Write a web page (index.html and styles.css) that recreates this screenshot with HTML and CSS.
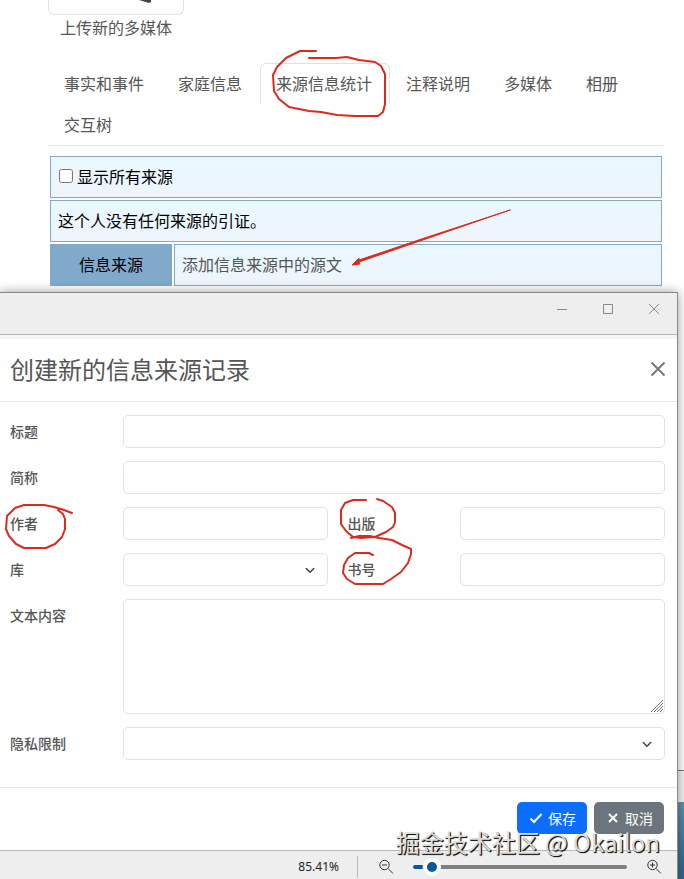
FILE: index.html
```html
<!DOCTYPE html>
<html lang="zh-CN">

<head>
    <meta charset="UTF-8">
    <meta name="viewport" content="width=device-width, initial-scale=1.0">
    <title>创建新的信息来源记录</title>
    <link rel="stylesheet" href="styles.css">
</head>

<body>
    <main class="page">
        <div class="media">
            <div class="thumb">
                <svg width="12" height="3" viewBox="0 0 12 3"><path d="M0 0h12v2l-2 1z" fill="#444" /></svg>
            </div>
            <a class="upload" href="#">上传新的多媒体</a>
        </div>

        <nav class="tabs">
            <a href="#">事实和事件</a>
            <a href="#">家庭信息</a>
            <a href="#" class="active">来源信息统计</a>
            <a href="#">注释说明</a>
            <a href="#">多媒体</a>
            <a href="#">相册</a>
            <a href="#">交互树</a>
        </nav>

        <table class="facts">
            <tr>
                <td colspan="2"><label class="show-all"><input type="checkbox">显示所有来源</label></td>
            </tr>
            <tr>
                <td colspan="2">这个人没有任何来源的引证。</td>
            </tr>
            <tr>
                <th scope="row">信息来源</th>
                <td><a href="#">添加信息来源中的源文</a></td>
            </tr>
        </table>
    </main>

    <div class="desk">
        <section class="window">
            <div class="titlebar">
                <button type="button" aria-label="最小化">
                    <svg width="12" height="12" viewBox="0 0 12 12"><path d="M1 6.5h10" /></svg>
                </button>
                <button type="button" aria-label="最大化">
                    <svg width="12" height="12" viewBox="0 0 12 12"><path d="M1.5 1.5h9v9h-9z" /></svg>
                </button>
                <button type="button" aria-label="关闭窗口">
                    <svg width="12" height="12" viewBox="0 0 12 12"><path d="M1 1l10 10M11 1L1 11" /></svg>
                </button>
            </div>

            <form class="dialog">
                <header class="dialog-header">
                    <h1>创建新的信息来源记录</h1>
                    <button type="button" aria-label="关闭">
                        <svg width="16" height="16" viewBox="0 0 16 16"><path d="M1.500 1.500l13 13M14.500 1.500l-13 13" /></svg>
                    </button>
                </header>

                <div class="fields">
                    <label for="title">标题</label>
                    <div class="wide"><input type="text" id="title"></div>

                    <label for="abbr">简称</label>
                    <div class="wide"><input type="text" id="abbr"></div>

                    <label for="author">作者</label>
                    <div><input type="text" id="author"></div>
                    <label for="publ">出版</label>
                    <div><input type="text" id="publ"></div>

                    <label for="repo">库</label>
                    <div><select id="repo"><option></option></select></div>
                    <label for="call">书号</label>
                    <div><input type="text" id="call"></div>

                    <label for="text">文本内容</label>
                    <div class="wide"><textarea id="text"></textarea></div>

                    <label for="privacy">隐私限制</label>
                    <div class="wide"><select id="privacy"><option></option></select></div>
                </div>

                <footer class="dialog-footer">
                    <button type="submit" class="save">
                        <svg width="14" height="14" viewBox="0 0 14 14"><path d="M1.500 7.500l3.500 3.500 7.500-8" /></svg>
                        保存
                    </button>
                    <button type="button" class="cancel">
                        <svg width="14" height="14" viewBox="0 0 14 14"><path d="M3 3l8 8M11 3l-8 8" /></svg>
                        取消
                    </button>
                </footer>
            </form>

            <div class="statusbar">
                <span class="percent">85.41%</span>
                <button type="button" aria-label="缩小">
                    <svg width="16" height="16" viewBox="0 0 16 16"><circle cx="6.5" cy="6" r="4.7" /><path d="M4 6h5M10 9.500l5 5" /></svg>
                </button>
                <input type="range" class="zoom" aria-label="缩放" min="0" max="100" value="5">
                <button type="button" aria-label="放大">
                    <svg width="16" height="16" viewBox="0 0 16 16"><circle cx="6.5" cy="6" r="4.7" /><path d="M4 6h5M6.500 3.500v5M10 9.500l5 5" /></svg>
                </button>
            </div>
        </section>
        <div class="edge">
            <div class="edge-page"></div>
            <div class="edge-bar"></div>
            <div class="edge-wallpaper"></div>
        </div>
    </div>

    <!-- red pen marks -->
    <svg class="marks" width="684" height="879" viewBox="0 0 684 879">
        <path d="M316 51h-16l-14 7-9 9-4 8 1 16 5 8 10 8 20 4 12 1 16 3 18 1h23l5-4 2-8V74l-4-8-6-4-16-2-12-3-11 1h-27" />
        <path d="M72 513l-8-3-10-3-10-2H24l-9 3-8 8-1 13 3 7 7 8 8 4h22l9-4 7-7 3-8v-10l-2-5-5-4" />
        <path d="M366 500h-13l-8 3-4 7v14l5 7 7 6 8 1 14-1 11-5 7-5 2-5v-9l-3-6-9-6-6-2" />
        <path d="M373 555l-4-2h-14l-7 5-4 7-1 8 4 6 8 5h28l8-5 10-7 7-9 3-9v-5l-9-4-10-5-13-2-9-2h-11l-8 2" />
        <path class="head" d="M510 210L420 239.500 359 260v-2l-7 7 8-1-1-2 61-21z" />
    </svg>
    <div class="watermark">掘金技术社区 @ Okailon</div>
</body>

</html>
```
FILE: styles.css
```css
* {
    margin: 0;
    padding: 0;
    box-sizing: border-box;
}

body {
    position: relative;
    min-height: 100vh;
    display: flex;
    flex-direction: column;
    overflow: hidden;
    background: #fff;
    color: #000;
    font-family: "Noto Sans CJK SC", "Noto Sans", sans-serif;
    font-size: 16px;
    line-height: 24px;
}

a {
    color: #555;
    text-decoration: none;
}

button,
input,
select,
textarea {
    font: inherit;
}

button {
    border: none;
    background: none;
    cursor: pointer;
}

svg {
    display: block;
    fill: none;
}

/* person page */
.page {
    padding: 0 20px 4px 48px;
}

.media {
    width: 136px;
    text-align: center;
}

.thumb {
    height: 15px;
    border: 1px solid #dee2e6;
    border-top: none;
    border-radius: 0 0 6px 6px;
    padding-left: 90px;
}

.upload {
    display: block;
}

.tabs {
    display: flex;
    flex-wrap: wrap;
    margin-top: 24px;
    border-bottom: 1px solid #dee2e6;
}

.tabs a {
    padding: 7px 17px 9px 15px;
    border: 1px solid transparent;
    border-bottom: none;
    border-radius: 6px 6px 0 0;
}

.tabs a.active {
    border-color: #dee2e6;
}

.facts {
    width: 100%;
    margin-top: 8px;
    border-spacing: 2px;
}

.facts td,
.facts th {
    height: 42px;
    padding: 7px 7px 9px;
    border: 1px solid #81a9cb;
    font-weight: 400;
}

.facts td {
    background: linear-gradient(#e9f8ff, #eef4fc);
}

.facts th {
    width: 122px;
    background: #81a9cb;
}

.show-all {
    display: flex;
    align-items: center;
    gap: 4px;
}

.show-all input {
    width: 14px;
    height: 14px;
    margin-left: 1px;
}

/* floating window */
.desk {
    flex: 1;
    display: flex;
}

.window {
    flex: 1;
    display: flex;
    flex-direction: column;
    position: relative;
    z-index: 1;
    border-top: 1px solid #888;
    border-right: 1px solid #888;
    background: #fff;
    box-shadow: 0 0 10px rgba(0, 0, 0, 0.4);
}

.titlebar {
    display: flex;
    justify-content: flex-end;
    height: 42px;
    padding-bottom: 9px;
    border-bottom: 1px solid #b9b9b9;
    background: #eee;
}

.titlebar button {
    display: grid;
    place-items: center;
    width: 46px;
}

.titlebar svg {
    stroke: #888;
}

.dialog {
    border-top: 4px solid #f5f5f5;
}

.dialog-header {
    display: flex;
    align-items: center;
    justify-content: space-between;
    height: 63px;
    padding: 0 11px 3px 10px;
    border-bottom: 1px solid #e6e8ea;
}

.dialog-header h1 {
    font-size: 24px;
    line-height: 32px;
    font-weight: 400;
    color: #555;
}

.dialog-header svg {
    stroke: #777;
    stroke-width: 2;
}

.fields {
    display: grid;
    grid-template-columns: 1fr 2fr 1fr 2fr;
    row-gap: 13px;
    padding: 13px 2px 27px 0;
    font-size: 14px;
    border-bottom: 1px solid #e6e8ea;
}

.fields label {
    padding: 4px 0 0 10px;
    font-weight: 500;
    color: #555;
}

.fields div {
    display: flex;
    padding: 0 10px;
}

.fields .wide {
    grid-column: span 3;
}

.fields input,
.fields select,
.fields textarea {
    width: 100%;
    height: 33px;
    padding: 4px 10px;
    border: 1px solid #dee2e6;
    border-radius: 5px;
    background: #fff;
}

.fields select {
    appearance: none;
    background: #fff url("data:image/svg+xml,%3Csvg xmlns='http://www.w3.org/2000/svg' viewBox='0 0 16 16'%3E%3Cpath fill='none' stroke='%23444' stroke-width='2' stroke-linecap='round' stroke-linejoin='round' d='m3 6 5 5 5-5'/%3E%3C/svg%3E") no-repeat right 11px center / 12px 12px;
}

.fields textarea {
    height: 115px;
    resize: vertical;
}

.fields textarea::-webkit-resizer {
    background: url("data:image/svg+xml,%3Csvg xmlns='http://www.w3.org/2000/svg' viewBox='0 0 15 15'%3E%3Cpath fill='none' stroke='%23777' d='M2 14 14 2M5 14l9-9M8 14l6-6M11 14l3-3'/%3E%3C/svg%3E") no-repeat center / 15px 15px;
}

.dialog-footer {
    display: flex;
    justify-content: flex-end;
    gap: 7px;
    padding: 14px 13px 16px;
}

.dialog-footer button {
    display: flex;
    align-items: center;
    gap: 5px;
    height: 32px;
    padding: 0 11px 0 12px;
    border-radius: 5px;
    font-size: 14px;
    color: #fff;
}

.dialog-footer svg {
    stroke: #fff;
    stroke-width: 2;
}

.save {
    background: #0d6efd;
}

.cancel {
    background: #6c757d;
}

.statusbar {
    flex: 1;
    display: flex;
    align-items: center;
    justify-content: flex-end;
    padding: 4px 15px 0 10px;
    border-top: 1px solid #b9b9b9;
    background: #eee;
}

.percent {
    height: 22px;
    margin-right: 20px;
    padding-right: 18px;
    border-right: 1px solid #bbb;
    font-family: "Noto Sans", sans-serif;
    font-size: 12px;
    line-height: 22px;
    color: #222;
}

.statusbar svg {
    stroke: #333;
}

.zoom {
    appearance: none;
    width: 214px;
    height: 18px;
    margin: 0 19px;
    background: none;
}

.zoom::-webkit-slider-runnable-track {
    height: 4px;
    border-radius: 2px;
    background: linear-gradient(to right, #005a9e 9px, #7f7f7f 9px);
}

.zoom::-webkit-slider-thumb {
    appearance: none;
    width: 18px;
    height: 18px;
    margin-top: -7px;
    border: 4px solid #fff;
    border-radius: 50%;
    background: #005a9e;
}

/* what shows beside the window */
.edge {
    display: flex;
    flex-direction: column;
    width: 6px;
}

.edge-page {
    flex: 1;
    border-bottom: 1px solid #777;
}

.edge-bar {
    height: 31px;
    background: #f3f3f3;
}

.edge-wallpaper {
    height: 77px;
    background: linear-gradient(#5b93b0, #2f6384);
}

.marks {
    position: absolute;
    top: 0;
    left: 0;
    z-index: 2;
    pointer-events: none;
    stroke: #dc2a1e;
    stroke-width: 2;
    stroke-linecap: round;
    stroke-linejoin: round;
}

.marks .head {
    fill: #dc2a1e;
    stroke-width: 1;
}

.watermark {
    position: absolute;
    right: 24px;
    bottom: 21px;
    z-index: 3;
    font-size: 24px;
    line-height: 32px;
    color: #ddd;
    text-shadow: 1px 1px 1px #111, 1px 1px 0 #444;
    pointer-events: none;
}
```
